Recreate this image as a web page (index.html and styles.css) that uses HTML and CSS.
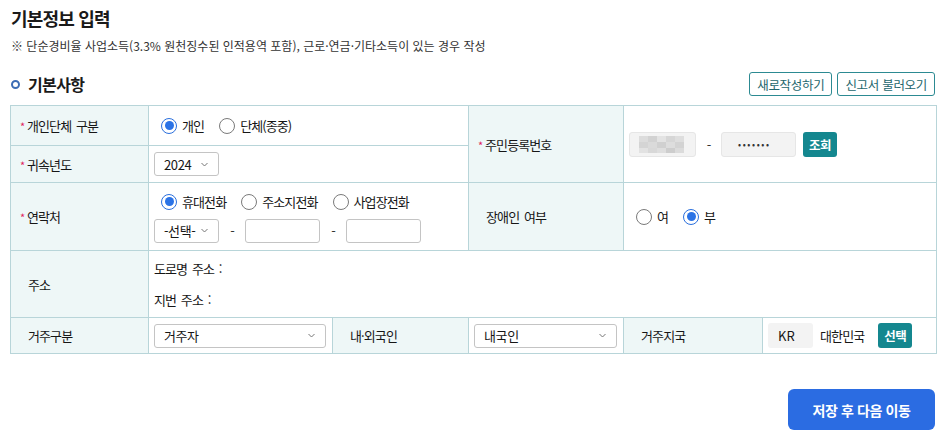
FILE: index.html
```html
<!DOCTYPE html>
<html lang="ko">
<head>
<meta charset="utf-8">
<title>기본정보 입력</title>
<link rel="stylesheet" href="styles.css">
</head>
<body>
<div class="page">
  <h1 class="title">기본정보 입력</h1>
  <p class="notice">※ 단순경비율 사업소득(3.3% 원천징수된 인적용역 포함), 근로·연금·기타소득이 있는 경우 작성</p>

  <div class="sec-head">
    <h2 class="sec-title"><span class="dot"></span>기본사항</h2>
    <div class="sec-btns">
      <button class="btn-line">새로작성하기</button>
      <button class="btn-line">신고서 불러오기</button>
    </div>
  </div>

  <table class="form">
    <colgroup>
      <col class="c1"><col class="c2"><col class="c3"><col class="c4"><col class="c5"><col class="c6">
    </colgroup>
    <tr class="r1">
      <th><span class="req">*</span>개인단체 구분</th>
      <td colspan="2">
        <div class="radios">
          <label class="radio on"><span class="circle"></span>개인</label>
          <label class="radio"><span class="circle"></span>단체(종중)</label>
        </div>
      </td>
      <th rowspan="2"><span class="req">*</span>주민등록번호</th>
      <td colspan="2" rowspan="2">
        <div class="line">
          <div class="field ro w67">
            <svg class="mosaic" width="45" height="17" viewBox="0 0 45 17">
              <rect x="0" y="0" width="9" height="6" fill="#dcdcdc"/>
              <rect x="9" y="0" width="9" height="6" fill="#d2d2d2"/>
              <rect x="18" y="0" width="9" height="6" fill="#e3e3e3"/>
              <rect x="27" y="0" width="9" height="6" fill="#d6d6d6"/>
              <rect x="36" y="0" width="9" height="6" fill="#dedede"/>
              <rect x="0" y="6" width="9" height="6" fill="#d4d4d4"/>
              <rect x="9" y="6" width="9" height="6" fill="#dadada"/>
              <rect x="18" y="6" width="9" height="6" fill="#d0d0d0"/>
              <rect x="27" y="6" width="9" height="6" fill="#dddddd"/>
              <rect x="36" y="6" width="9" height="6" fill="#d3d3d3"/>
              <rect x="0" y="12" width="9" height="5" fill="#e2e2e2"/>
              <rect x="9" y="12" width="9" height="5" fill="#d8d8d8"/>
              <rect x="18" y="12" width="9" height="5" fill="#dedede"/>
              <rect x="27" y="12" width="9" height="5" fill="#cdcdcd"/>
              <rect x="36" y="12" width="9" height="5" fill="#dbdbdb"/>
            </svg>
          </div>
          <span class="dash">-</span>
          <div class="field ro w75 pw">•••••••</div>
          <button class="btn-teal">조회</button>
        </div>
      </td>
    </tr>
    <tr class="r2">
      <th><span class="req">*</span>귀속년도</th>
      <td colspan="2">
        <div class="select w65"><span>2024</span><svg class="chev" width="7" height="5" viewBox="0 0 7 5"><path d="M0.5 1 L3.5 4 L6.5 1" fill="none" stroke="#777" stroke-width="1"/></svg></div>
      </td>
    </tr>
    <tr class="r3">
      <th><span class="req">*</span>연락처</th>
      <td colspan="2">
        <div class="stack">
          <div class="radios">
            <label class="radio on"><span class="circle"></span>휴대전화</label>
            <label class="radio"><span class="circle"></span>주소지전화</label>
            <label class="radio"><span class="circle"></span>사업장전화</label>
          </div>
          <div class="line">
            <div class="select w65"><span>-선택-</span><svg class="chev" width="7" height="5" viewBox="0 0 7 5"><path d="M0.5 1 L3.5 4 L6.5 1" fill="none" stroke="#777" stroke-width="1"/></svg></div>
            <span class="dash">-</span>
            <div class="field w75"></div>
            <span class="dash">-</span>
            <div class="field w75"></div>
          </div>
        </div>
      </td>
      <th class="nreq">장애인 여부</th>
      <td colspan="2">
        <div class="radios">
          <label class="radio"><span class="circle"></span>여</label>
          <label class="radio on"><span class="circle"></span>부</label>
        </div>
      </td>
    </tr>
    <tr class="r4">
      <th class="nreq">주소</th>
      <td colspan="5">
        <div class="addr">
          <p>도로명 주소 :</p>
          <p>지번 주소 :</p>
        </div>
      </td>
    </tr>
    <tr class="r5">
      <th class="nreq">거주구분</th>
      <td>
        <div class="select w172"><span>거주자</span><svg class="chev" width="7" height="5" viewBox="0 0 7 5"><path d="M0.5 1 L3.5 4 L6.5 1" fill="none" stroke="#777" stroke-width="1"/></svg></div>
      </td>
      <th class="nreq">내·외국인</th>
      <td>
        <div class="select w143"><span>내국인</span><svg class="chev" width="7" height="5" viewBox="0 0 7 5"><path d="M0.5 1 L3.5 4 L6.5 1" fill="none" stroke="#777" stroke-width="1"/></svg></div>
      </td>
      <th class="nreq">거주지국</th>
      <td>
        <div class="line">
          <div class="code">KR</div>
          <span class="country">대한민국</span>
          <button class="btn-teal">선택</button>
        </div>
      </td>
    </tr>
  </table>

  <div class="actions">
    <button class="btn-primary">저장 후 다음 이동</button>
  </div>
</div>
</body>
</html>
```

FILE: styles.css
```css
* { box-sizing: border-box; }

body {
  margin: 0;
  background: #fff;
  color: #1a1a1a;
  font-family: "Noto Sans CJK KR", "Noto Sans", sans-serif;
}

.page {
  padding: 8px 7px 0 10px;
}

.title {
  margin: 0;
  padding-left: 1px;
  font-size: 18px;
  line-height: 20px;
  font-weight: 700;
  letter-spacing: -0.8px;
  color: #1a1a1a;
}

.notice {
  margin: 10px 0 0;
  padding-left: 1px;
  font-size: 12px;
  line-height: 16px;
  color: #333;
  letter-spacing: 0;
}

.sec-head {
  display: flex;
  justify-content: space-between;
  align-items: center;
  height: 24px;
  margin-top: 18px;
}

.sec-title {
  display: flex;
  align-items: center;
  gap: 8px;
  margin: 0;
  padding-left: 1px;
  font-size: 16px;
  line-height: 20px;
  font-weight: 700;
  letter-spacing: -0.6px;
  color: #1a1a1a;
}

.dot {
  width: 9px;
  height: 9px;
  border: 2px solid #3d6db5;
  border-radius: 50%;
}

.sec-btns {
  display: flex;
  gap: 5px;
}

.btn-line {
  height: 24px;
  padding: 0 7px;
  border: 1px solid #2c8a92;
  border-radius: 3px;
  background: #fff;
  color: #24666d;
  font-family: inherit;
  font-size: 12.5px;
  letter-spacing: -0.3px;
}

.form {
  width: 926px;
  margin-top: 9px;
  border-collapse: collapse;
  table-layout: fixed;
  font-size: 13px;
  letter-spacing: -0.9px;
  word-spacing: 2px;
  color: #161616;
}

.c1 { width: 138px; }
.c2 { width: 184px; }
.c3 { width: 136px; }
.c4 { width: 155px; }
.c5 { width: 139px; }
.c6 { width: 174px; }

.form th,
.form td {
  border: 1px solid #b8d5d9;
  padding: 0 5px;
  vertical-align: middle;
}

.form th {
  background: #eef7f7;
  text-align: left;
  font-weight: 400;
  padding-left: 17px;
}

.req {
  display: inline-block;
  width: 7px;
  margin-left: -8px;
  color: #e0245e;
  font-size: 11px;
}

.r1 td, .r1 th { height: 40px; }
.r2 td, .r2 th { height: 37px; }
.r3 td, .r3 th { height: 68px; }
.r4 td, .r4 th { height: 67px; }
.r5 td, .r5 th { height: 36px; }

.radios {
  display: flex;
  align-items: center;
  gap: 15px;
  padding-left: 7px;
}

.radio {
  display: flex;
  align-items: center;
  gap: 5px;
  line-height: 18px;
}

.circle {
  width: 16px;
  height: 16px;
  border: 1px solid #7a7a7a;
  border-radius: 50%;
  background: #fff;
  display: flex;
  align-items: center;
  justify-content: center;
}

.radio.on .circle {
  border-color: #2a6fdd;
}

.radio.on .circle::after {
  content: "";
  width: 9px;
  height: 9px;
  border-radius: 50%;
  background: #2b73e6;
}

.line {
  display: flex;
  align-items: center;
}

.stack {
  display: flex;
  flex-direction: column;
  gap: 8px;
  padding-top: 2px;
}

.select {
  display: flex;
  align-items: center;
  justify-content: space-between;
  height: 24px;
  padding: 0 10px 0 9px;
  border: 1px solid #c4c4c4;
  border-radius: 3px;
  background: #fff;
  letter-spacing: -0.4px;
}

.chev { flex: none; }

.w65 { width: 65px; }
.w67 { width: 67px; }
.w75 { width: 75px; }
.w143 { width: 143px; }
.w172 { width: 172px; }

.field {
  height: 24px;
  border: 1px solid #c4c4c4;
  border-radius: 3px;
  background: #fff;
}

.field.ro {
  height: 25px;
  background: #f3f3f3;
  border-color: #e6e6e6;
  display: flex;
  align-items: center;
  padding-left: 9px;
}

.field.pw {
  padding-left: 16px;
  font-size: 9px;
  letter-spacing: 1.6px;
  color: #333;
}

.dash {
  width: 26px;
  text-align: center;
  color: #333;
}

.line .field.ro + .dash { width: 25px; }

.btn-teal {
  height: 25px;
  margin-left: 7px;
  padding: 0 6px;
  border: 0;
  border-radius: 3px;
  background: #14878f;
  color: #fff;
  font-family: inherit;
  font-size: 12.5px;
  font-weight: 700;
  letter-spacing: -0.5px;
}

.addr p {
  margin: 0;
  line-height: 31px;
}

.code {
  width: 45px;
  height: 25px;
  line-height: 25px;
  padding-left: 10px;
  background: #f3f3f3;
  border-radius: 3px;
  letter-spacing: 0;
}

.country {
  margin-left: 7px;
}

.r5 .btn-teal {
  margin-left: 14px;
}

.actions {
  display: flex;
  justify-content: flex-end;
  margin-top: 35px;
}

.btn-primary {
  width: 147px;
  height: 41px;
  border: 0;
  border-radius: 6px;
  background: #2b6ce2;
  color: #fff;
  font-family: inherit;
  font-size: 14px;
  font-weight: 700;
  letter-spacing: -0.4px;
}
```
